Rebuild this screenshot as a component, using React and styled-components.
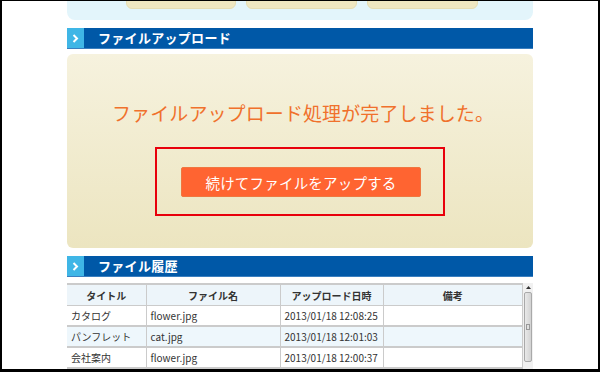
import React from "react";
import styled, { createGlobalStyle } from "styled-components";

const Global = createGlobalStyle`
  html, body { margin: 0; padding: 0; background: #fff; }
  body { font-family: "Noto Sans CJK JP", "Noto Sans", sans-serif; }
`;

const Frame = styled.div`
  width: 600px;
  height: 372px;
  box-sizing: border-box;
  border: 2px solid #000;
  border-top-width: 1px;
  border-bottom-width: 3px;
  overflow: hidden;
  background: #fff;
`;

const Column = styled.div`
  width: 466px;
  margin: -17px auto 0;
  display: flex;
  flex-direction: column;
`;

const NavPanel = styled.div`
  background: #e3f5fb;
  border-radius: 0 0 8px 8px;
  height: 36px;
  box-sizing: border-box;
  padding-left: 59px;
  display: flex;
  gap: 10px;
`;

const NavButton = styled.div`
  width: ${(p) => p.$w}px;
  height: 25px;
  box-sizing: border-box;
  background: #efe7c1;
  border: 1px solid #e6ddb2;
  border-radius: 0 0 6px 6px;
  font-size: 10px;
  line-height: 14px;
  white-space: nowrap;
  color: #5a4a2a;
  display: flex;
  align-items: flex-start;
  justify-content: center;
  padding-top: 2px;
`;

const SectionHeader = styled.div`
  margin-top: ${(p) => p.$mt}px;
  height: 21px;
  display: flex;
  background: #0058a7;
  border-bottom: 1px solid #3a7fc0;
  box-sizing: border-box;
`;

const Chevron = styled.div`
  width: 17px;
  background: #3fb6e6;
  display: flex;
  align-items: center;
  justify-content: center;
`;

const HeaderTitle = styled.div`
  padding-left: 14px;
  color: #fff;
  font-weight: bold;
  font-size: 13px;
  line-height: 20px;
  letter-spacing: 0.3px;
`;

const DonePanel = styled.div`
  margin-top: 5px;
  height: 194px;
  border-radius: 6px;
  background: linear-gradient(#f6f2de, #ece5c0);
  display: flex;
  flex-direction: column;
  align-items: center;
  padding-top: 45px;
  box-sizing: border-box;
`;

const Message = styled.div`
  color: #f0712c;
  font-size: 19px;
  line-height: 27px;
  letter-spacing: 0.1px;
  padding-left: 6px;
`;

const Highlight = styled.div`
  margin-top: 21px;
  width: 290px;
  height: 69px;
  box-sizing: border-box;
  border: 2px solid #e8000b;
  display: flex;
  justify-content: center;
  padding-top: 18px;
  padding-left: 2px;
`;

const ContinueButton = styled.button`
  width: 240px;
  height: 30px;
  box-sizing: border-box;
  background: #ff6431;
  border: 1px solid #f0763f;
  border-radius: 2px;
  color: #fff;
  font-family: inherit;
  font-size: 14.5px;
  letter-spacing: 0.2px;
  padding: 0;
`;

const TableArea = styled.div`
  margin-top: 6px;
  display: flex;
`;

const Table = styled.table`
  width: 456px;
  border-collapse: collapse;
  table-layout: fixed;
  font-size: 10px;
  color: #333;
`;

const Th = styled.th`
  height: 20px;
  padding: 0;
  background: #edf5fa;
  border: 1px solid #cbcbcb;
  border-top-width: 2px;
  font-weight: bold;
  text-align: center;
  &:first-child { border-left: none; }
`;

const Row = styled.tr`
  background: ${(p) => (p.$alt ? "#eef7fc" : "#fff")};
`;

const Td = styled.td`
  height: 19px;
  padding: 0 4px;
  border: 1px solid #cbcbcb;
  border-bottom-width: 2px;
  white-space: nowrap;
  overflow: hidden;
  &:first-child { border-left: none; }
`;

const Scrollbar = styled.div`
  width: 10px;
  background: #f1f1f1;
  display: flex;
  flex-direction: column;
  align-items: center;
`;

const ScrollArrow = styled.div`
  height: 9px;
  width: 10px;
  display: flex;
  align-items: center;
  justify-content: center;
`;

const Thumb = styled.div`
  width: 8px;
  height: 70px;
  box-sizing: border-box;
  border: 1px solid #a9a9a9;
  border-radius: 2px;
  background: linear-gradient(90deg, #e9e9e9, #d2d2d2);
  display: flex;
  align-items: center;
  justify-content: center;
`;

const Grip = styled.div`
  width: 4px;
  height: 6px;
  border: 1px solid #999;
  box-sizing: border-box;
  background: #e0e0e0;
`;

const rows = [
  ["カタログ", "flower.jpg", "2013/01/18 12:08:25", ""],
  ["パンフレット", "cat.jpg", "2013/01/18 12:01:03", ""],
  ["会社案内", "flower.jpg", "2013/01/18 12:00:37", ""],
  ["", "", "", ""],
];

function ChevronIcon() {
  return (
    <svg width="7" height="9" viewBox="0 0 7 9">
      <path d="M1.5 1 L5 4.5 L1.5 8" stroke="#fff" strokeWidth="2" fill="none" />
    </svg>
  );
}

function Section({ title, mt }) {
  return (
    <SectionHeader $mt={mt}>
      <Chevron>
        <ChevronIcon />
      </Chevron>
      <HeaderTitle>{title}</HeaderTitle>
    </SectionHeader>
  );
}

export default function App() {
  return (
    <>
      <Global />
      <Frame>
        <Column>
          <NavPanel>
            <NavButton $w={110}>ファイルアップロード</NavButton>
            <NavButton $w={111}>ファイル履歴</NavButton>
            <NavButton $w={111}>ログアウトする</NavButton>
          </NavPanel>
          <Section title="ファイルアップロード" mt={8} />
          <DonePanel>
            <Message>ファイルアップロード処理が完了しました。</Message>
            <Highlight>
              <ContinueButton>続けてファイルをアップする</ContinueButton>
            </Highlight>
          </DonePanel>
          <Section title="ファイル履歴" mt={8} />
          <TableArea>
            <Table>
              <colgroup>
                <col style={{ width: 79 }} />
                <col style={{ width: 134 }} />
                <col style={{ width: 103 }} />
                <col />
              </colgroup>
              <thead>
                <tr>
                  <Th>タイトル</Th>
                  <Th>ファイル名</Th>
                  <Th>アップロード日時</Th>
                  <Th>備考</Th>
                </tr>
              </thead>
              <tbody>
                {rows.map((r, i) => (
                  <Row key={i} $alt={i % 2 === 1}>
                    {r.map((c, j) => (
                      <Td key={j}>{c}</Td>
                    ))}
                  </Row>
                ))}
              </tbody>
            </Table>
            <Scrollbar>
              <ScrollArrow>
                <svg width="5" height="3" viewBox="0 0 5 3">
                  <path d="M0 3 L2.5 0 L5 3 Z" fill="#333" />
                </svg>
              </ScrollArrow>
              <Thumb>
                <Grip />
              </Thumb>
            </Scrollbar>
          </TableArea>
        </Column>
      </Frame>
    </>
  );
}
